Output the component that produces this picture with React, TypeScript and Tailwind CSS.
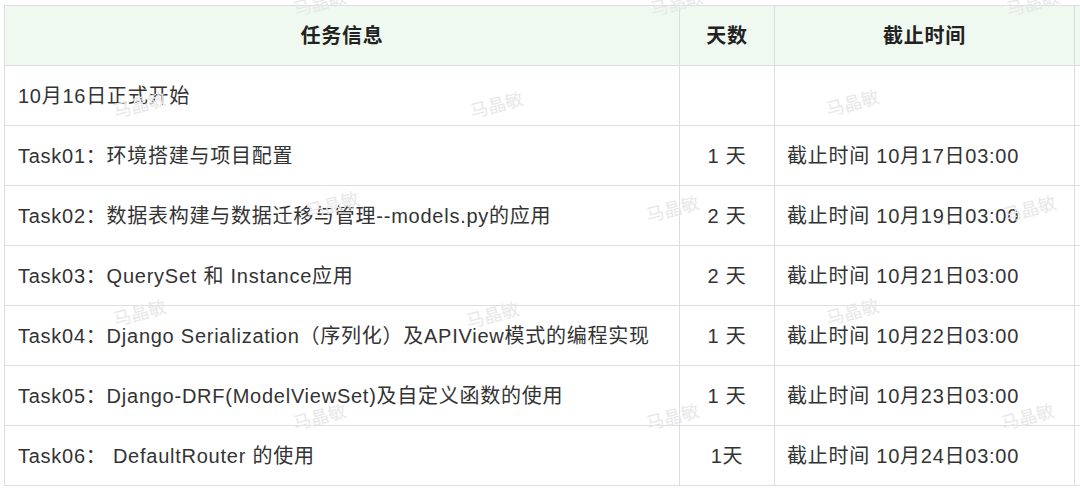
const rows: { task: string; days: string; deadline: string }[] = [
  { task: "10月16日正式开始", days: "", deadline: "" },
  { task: "Task01：环境搭建与项目配置", days: "1 天", deadline: "截止时间 10月17日03:00" },
  { task: "Task02：数据表构建与数据迁移与管理--models.py的应用", days: "2 天", deadline: "截止时间 10月19日03:00" },
  { task: "Task03：QuerySet 和 Instance应用", days: "2 天", deadline: "截止时间 10月21日03:00" },
  { task: "Task04：Django Serialization（序列化）及APIView模式的编程实现", days: "1 天", deadline: "截止时间 10月22日03:00" },
  { task: "Task05：Django-DRF(ModelViewSet)及自定义函数的使用", days: "1 天", deadline: "截止时间 10月23日03:00" },
  { task: "Task06： DefaultRouter 的使用", days: "1天", deadline: "截止时间 10月24日03:00" },
];

// watermark centers, as seen on the screenshot
const marks: [number, number][] = [
  [320, 4], [677, 4], [1033, 4],
  [140, 106], [497, 106], [853, 104],
  [333, 206], [673, 210], [1030, 210],
  [140, 314], [493, 316], [853, 313],
  [320, 418], [673, 418], [1028, 418],
];

const cell = "border border-[#dcdde2] h-[60px]";

export default function App() {
  return (
    <div
      className="relative h-[491px] w-[1080px] overflow-hidden bg-white text-[#333] text-[20px] tracking-[0.75px]"
      style={{ fontFamily: '"Liberation Sans", "Noto Sans CJK SC", sans-serif' }}
    >
      <div className="pl-[4px] pt-[5px]">
        <table className="w-[1176px] border-collapse table-fixed">
          <colgroup>
            <col className="w-[675px]" />
            <col className="w-[95px]" />
            <col className="w-[300px]" />
            <col className="w-[106px]" />
          </colgroup>
          <thead>
            <tr className="bg-[#eff9ef]">
              <th className={`${cell} text-center font-bold text-[#222]`}>任务信息</th>
              <th className={`${cell} text-center font-bold text-[#222]`}>天数</th>
              <th className={`${cell} text-center font-bold text-[#222]`}>截止时间</th>
              <th className={cell} />
            </tr>
          </thead>
          <tbody>
            {rows.map((r) => (
              <tr key={r.task}>
                <td className={`${cell} px-[13px] whitespace-nowrap`}>{r.task}</td>
                <td className={`${cell} text-center`}>{r.days}</td>
                <td className={`${cell} px-[12px] whitespace-nowrap`}>{r.deadline}</td>
                <td className={cell} />
              </tr>
            ))}
          </tbody>
        </table>
      </div>

      {marks.map(([x, y]) => (
        <span
          key={`${x}-${y}`}
          className="pointer-events-none absolute -translate-x-1/2 -translate-y-1/2 -rotate-[15deg] whitespace-nowrap text-[18px] tracking-normal text-[#e8e8e8] select-none"
          style={{ left: x, top: y }}
        >
          马晶敏
        </span>
      ))}
    </div>
  );
}
